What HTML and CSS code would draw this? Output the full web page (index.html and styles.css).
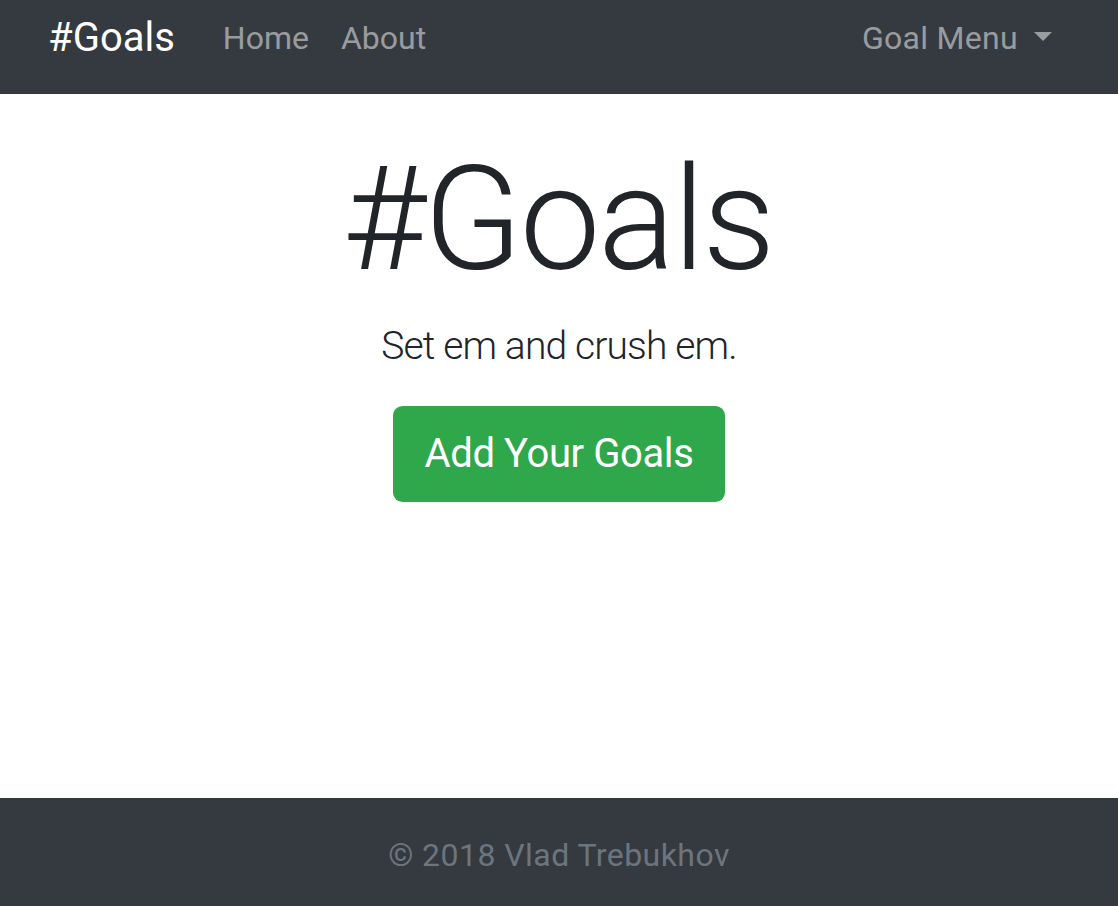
FILE: index.html
```html
<!DOCTYPE html>
<html lang="en">
<head>
<meta charset="utf-8">
<title>#Goals</title>
<link rel="stylesheet" href="styles.css">
</head>
<body>
<nav class="navbar">
  <div class="navbar-row">
    <a class="brand" href="#">#Goals</a>
    <ul class="nav">
      <li><a class="nav-link" href="#">Home</a></li>
      <li><a class="nav-link" href="#">About</a></li>
    </ul>
    <div class="nav-right">
      <a class="nav-link dropdown-toggle" href="#">Goal Menu<span class="caret"></span></a>
    </div>
  </div>
</nav>
<main class="hero">
  <h1 class="display">#Goals</h1>
  <p class="lead">Set em and crush em.</p>
  <a class="btn-success" href="#">Add Your Goals</a>
</main>
<footer class="footer">
  <p class="footer-text">© 2018 Vlad Trebukhov</p>
</footer>
</body>
</html>
```
FILE: styles.css
```css
* { box-sizing: border-box; }
html, body { margin: 0; padding: 0; }
body {
  font-family: "Roboto", "Liberation Sans", sans-serif;
  color: #212529;
  background: #fff;
  min-height: 100vh;
  display: flex;
  flex-direction: column;
}
a { text-decoration: none; }
.navbar {
  background: #343a40;
  height: 94px;
  padding: 0 50px 18px 48px;
}
.navbar-row {
  height: 76px;
  display: flex;
  align-items: center;
}
.brand {
  color: #fff;
  font-size: 40px;
  line-height: 60px;
  margin-right: 32px;
}
.nav {
  list-style: none;
  margin: 0;
  padding: 0;
  display: flex;
}
.nav-link {
  display: block;
  color: rgba(255,255,255,0.5);
  font-size: 32px;
  line-height: 48px;
  padding: 0 16px;
}
.nav-right { margin-left: auto; }
.dropdown-toggle { display: flex; align-items: center; letter-spacing: 0.3px; }
.caret {
  display: inline-block;
  width: 0; height: 0;
  margin-left: 16px;
  margin-top: -4px;
  border-top: 9.6px solid rgba(255,255,255,0.5);
  border-left: 9.6px solid transparent;
  border-right: 9.6px solid transparent;
}
.hero {
  flex: 1;
  display: flex;
  flex-direction: column;
  align-items: center;
  padding-top: 40px;
}
.display {
  margin: 0;
  font-size: 144px;
  font-weight: 300;
  line-height: 172px;
  letter-spacing: -2.5px;
  text-indent: -2.5px;
}
.lead {
  margin: 10px 0 0 0;
  font-size: 39px;
  font-weight: 300;
  line-height: 60px;
  letter-spacing: -0.85px;
}
.btn-success {
  margin-top: 30px;
  display: block;
  background: #2fa74b;
  color: #fff;
  font-size: 40px;
  line-height: 60px;
  padding: 18px 32px;
  border-radius: 9.6px;
  letter-spacing: -0.4px;
}
.footer {
  background: #343a40;
  height: 108px;
  display: flex;
  align-items: center;
  justify-content: center;
}
.footer-text {
  margin: 6px 0 0 0;
  color: #6c757d;
  font-size: 32px;
  line-height: 48px;
  letter-spacing: 0.45px;
}
```
